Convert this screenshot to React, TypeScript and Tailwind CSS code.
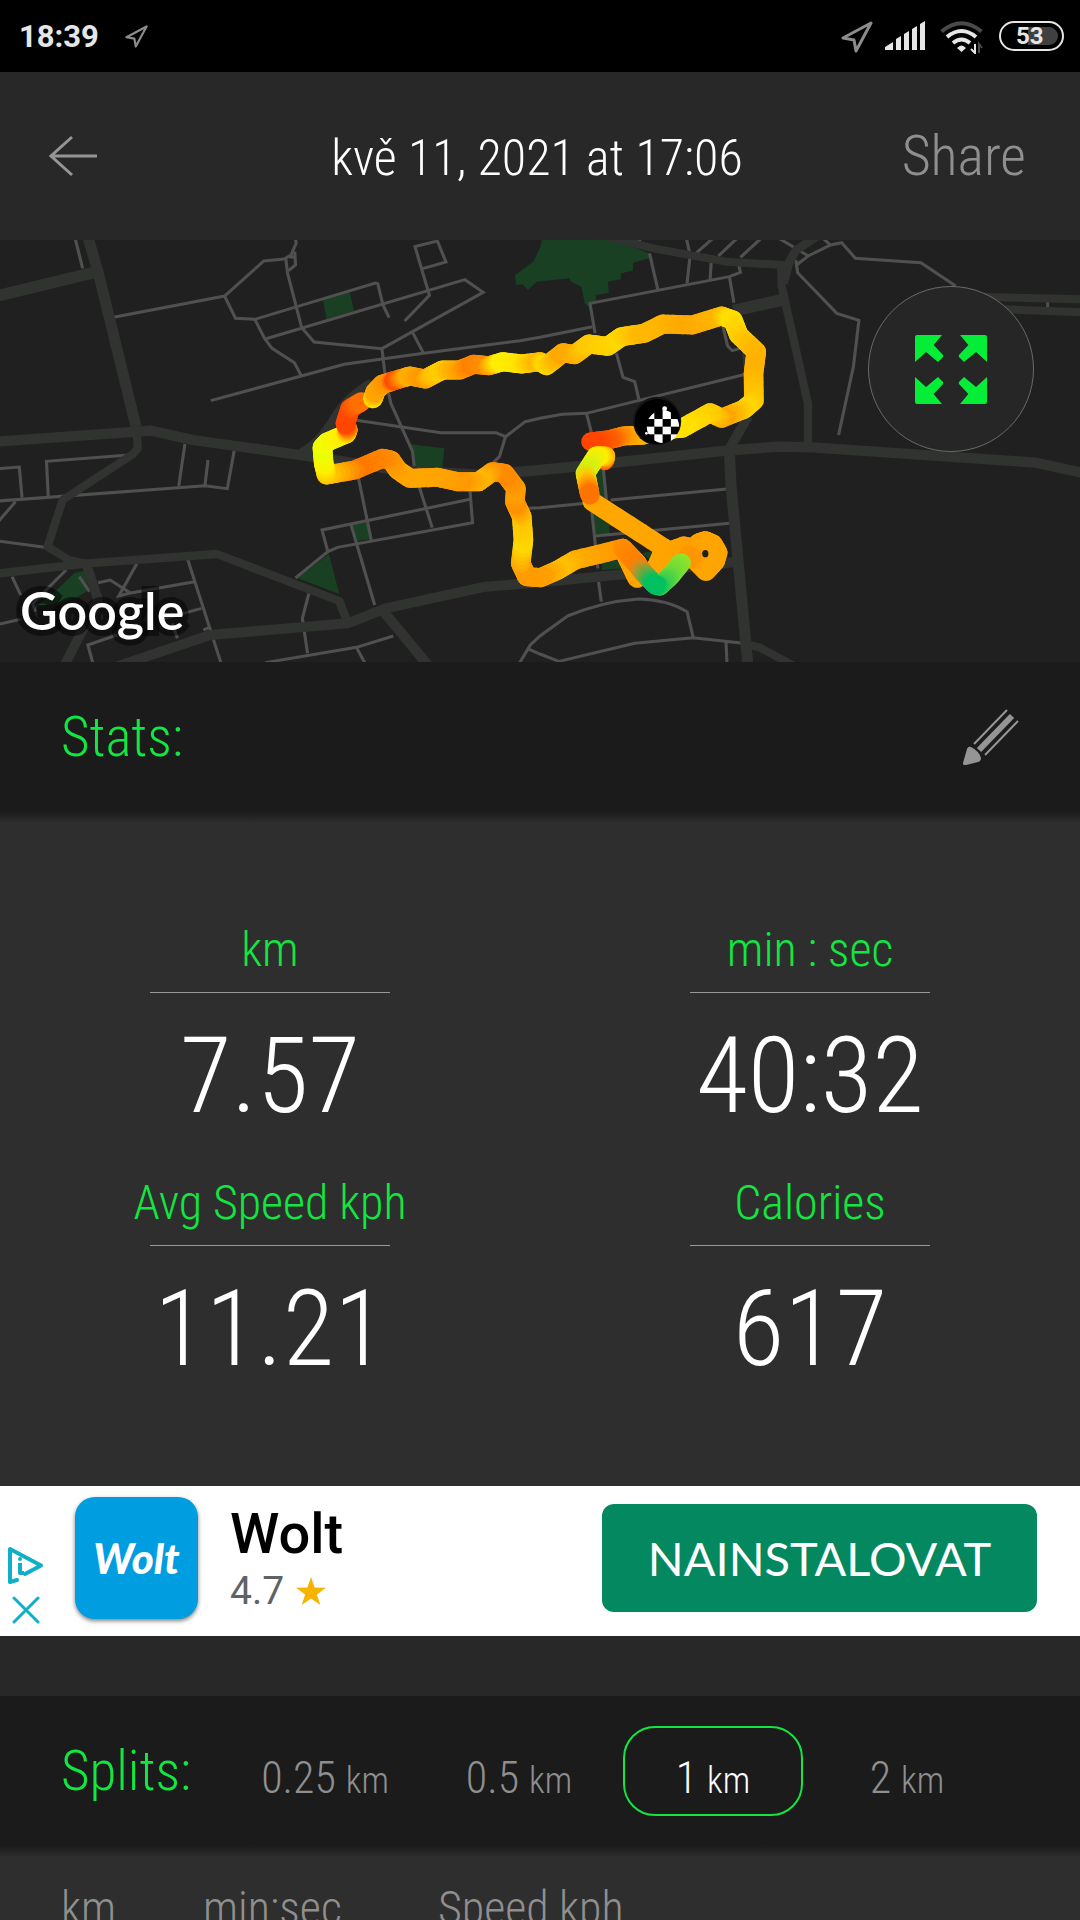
import React from "react";

const CONDENSED = "font-['Roboto_Condensed','Roboto','Liberation_Sans',sans-serif] font-light";

type RoutePoint = [number, number, string];

const MAJOR_ROADS: [string, number][] = [
  ["M-10 168 L275 97", 35],
  ["M255 -10 L285 97 L395 560", 32],
  ["M396 560 L400 625 L385 643 L182 780 L138 920 L200 960 L255 972", 24],
  ["M-10 605 L440 572 L560 600 L870 645 L1000 665 L1150 690 L1400 705 L1568 690 L1720 675 L2108 632 L2258 620 L2358 622 L3008 668 L3146 699", 31],
  ["M870 645 Q930 610 970 540 T1080 430", 30],
  ["M-10 1001 L255 970 L630 942 L985 1083 L1008 1145", 25],
  ["M250 970 L285 1080 L185 1280", 28],
  ["M330 1283 L610 1185 L1010 1150 L1120 1105 L1410 1040 L1568 1027 L1840 1000 L2140 965", 30],
  ["M1110 1110 L1250 1285", 30],
  ["M1760 -10 L1898 25 L2108 65 L2288 76", 24],
  ["M2370 -10 L2312 30 L2290 70 L2275 130", 26],
  ["M2268 80 L2270 140 L2346 490 L2346 620", 24],
  ["M2130 212 L2278 178", 36],
  ["M2840 170 L3146 178", 24],
  ["M2870 206 L3146 217", 24],
  ["M2118 640 L2123 740 L2172 1280", 32],
  ["M2172 530 L2120 622", 28],
  ["M2165 320 L2175 420", 24],
  ["M2175 1215 L2205 1222 L2310 1280", 24],
];

const MINOR_ROADS = [
  "M218 -5 L240 85",
  "M330 232 L652 168 L766 63 L825 57 L845 45 L860 10 L858 -5",
  "M652 168 L684 235 L740 238 L1090 129 L1097 131 L1112 195 L1130 233",
  "M830 57 L835 100 L876 263 L912 306 L1109 326 L1403 157 L1350 119 L770 297",
  "M740 238 L768 295 L790 325 L855 368 L875 408",
  "M856 35 L858 75 L838 92 M840 52 L852 50",
  "M1227 86 L1295 66 L1270 3 L1205 20 L1247 166 L1175 243",
  "M612 482 L1000 373 L1230 340 L1510 302 L1568 292 L1720 260",
  "M1198 277 L1230 340",
  "M1109 326 L1120 420 L1135 490 L1198 635 L1205 700 L1255 863",
  "M1030 540 L1280 578 L1440 578 L1468 590 L1525 545 L1568 535 L1633 523 L1703 520 L2168 402",
  "M1468 590 L1450 650 L1425 675",
  "M1040 710 L1078 900",
  "M1365 778 L935 870 L952 935 L980 922 L1372 848 L1365 755",
  "M1018 850 L1088 1095",
  "M952 935 L858 1014",
  "M-5 686 L56 681 L64 773",
  "M140 768 L135 664 L365 646",
  "M-5 783 L595 737 L660 746 L680 632",
  "M537 612 L519 738 M604 660 L595 737",
  "M45 785 L-5 845",
  "M-5 903 L130 922",
  "M545 958 L642 1270 M35 1010 L60 1065 M192 990 L95 1090 L102 1115",
  "M398 970 L345 1068 L375 1060 L565 1025 M285 1028 L320 1020 L380 1060",
  "M-5 1153 L60 1138 M470 1138 L585 1105 M500 1150 L515 1195 M230 1010 L260 1055",
  "M270 1270 L255 1215 L340 1185 M590 1170 L606 1163",
  "M897 1060 L878 1135 L893 1240 M770 1268 L1035 1222 L1142 1188 M1035 1222 L1060 1270",
  "M1508 1270 L1540 1215 L1568 1188 L1648 1128 Q1748 1085 1853 1077 Q1935 1078 1995 1115 L2013 1193",
  "M1530 1225 L1568 1242 L1623 1264 L1843 1210 L2013 1193 L2158 1210 M2108 1205 L2111 1270",
  "M1500 806 L1568 803 L1700 790 M1773 780 L2111 747",
  "M1858 -5 L1856 8 M1886 40 L1910 148 M1993 -5 L2004 45 L1995 130 M2065 68 L2062 118",
  "M2070 -5 L2023 38 M2140 -5 L2086 48 M2210 -5 L2150 52",
  "M2145 75 L2150 97 L2118 110 L1713 190 L1728 280 M2118 110 L2131 188",
  "M2262 -5 L2346 47 M2313 75 L2348 47 L2411 15 L2390 -5 M2411 15 L2444 8 L2484 55 L2674 68 L2775 138",
  "M2311 60 L2316 98 L2430 220 L2494 241 L2478 380 L2435 585",
  "M2098 255 L2113 318 L2126 332 L2150 325",
  "M1790 340 L1809 412 L1843 425 L1855 478 M1703 520 L1718 580",
  "M1752 690 L1761 780 M1718 810 L1736 985 M1728 888 L2118 850 M1738 1025 L1746 1085",
  "M3042 185 L3042 205",
];

const PARKS = [
  "938,180 1015,155 1028,212 948,237",
  "1192,613 1290,625 1284,685 1205,685",
  "1022,852 1065,848 1075,898 1037,903",
  "955,942 985,1062 865,1015",
  "175,1040 215,1000 245,993 258,1050 220,1075 150,1092 105,1100",
  "1496,105 1548,65 1568,25 1575,-5 1768,-5 1886,40 1886,55 1838,68 1838,92 1803,100 1803,118 1765,125 1768,158 1731,165 1731,185 1708,200 1698,190 1688,140 1658,125 1653,115 1558,125 1533,150 1518,133 1498,135",
  "1728,690 1753,690 1760,770 1728,790",
  "1723,815 1768,835 1770,882 1726,885",
  "1748,965 1803,960 1818,985 1748,990",
  "1865,940 1893,933 1893,965",
];

const SOUTH_LOOP: RoutePoint[] = [
  [1720, 785, "#ffa800"], [1930, 925, "#ffa500"], [1905, 985, "#ffa500"], [1930, 940, "#ffa500"],
  [1985, 918, "#ffa200"], [2012, 925, "#ffa000"], [2030, 908, "#ffa000"], [2048, 902, "#ffa200"],
  [2070, 912, "#ffa500"], [2084, 938, "#ffa500"], [2076, 965, "#ffa500"], [2050, 994, "#ffa500"],
  [2018, 960, "#ffa500"], [2000, 945, "#ff9500"],
];

const MAIN_LOOP: RoutePoint[] = [
  [1850, 1015, "#ffa500"], [1820, 950, "#ffa500"], [1850, 970, "#ff9a00"], [1808, 925, "#ff9000"],
  [1670, 960, "#ffa800"], [1620, 990, "#ffc000"], [1570, 1013, "#ffa000"], [1530, 1010, "#ff9c00"],
  [1512, 970, "#ff9c00"], [1520, 900, "#ffd800"], [1515, 830, "#ffc800"], [1495, 785, "#ff9000"],
  [1498, 745, "#ffa000"], [1465, 700, "#ff8c00"], [1430, 695, "#ff8c00"], [1390, 725, "#ffb800"],
  [1330, 725, "#ff9800"], [1270, 712, "#ffa200"], [1190, 715, "#ffa500"], [1155, 690, "#ffa500"],
  [1135, 660, "#ff9800"], [1110, 655, "#ff8c00"], [1030, 690, "#ff7800"], [948, 705, "#ffc000"],
  [940, 670, "#ffee00"], [936, 622, "#eaff00"], [950, 606, "#f0ff00"], [1005, 582, "#ffee00"],
  [1010, 570, "#ffb000"], [1003, 550, "#ff4500"], [1017, 505, "#ff4800"], [1050, 485, "#ff7000"],
];

const NORTH_LOOP: RoutePoint[] = [
  [1083, 476, "#fff000"], [1090, 455, "#ffa800"], [1110, 433, "#ffa000"], [1135, 425, "#ff9000"],
  [1150, 420, "#ff4500"], [1190, 408, "#ffb000"], [1235, 417, "#ff9800"], [1262, 402, "#ffc000"],
  [1285, 390, "#ffd000"], [1335, 390, "#ffa800"], [1375, 373, "#ff8000"], [1420, 377, "#ff9000"],
  [1460, 365, "#fff000"], [1515, 372, "#ffe600"], [1568, 365, "#ffb800"], [1587, 377, "#ffdc00"],
  [1635, 338, "#ffa800"], [1668, 344, "#ffaa00"], [1710, 312, "#ffc800"], [1765, 319, "#ffd000"],
  [1805, 290, "#ffd800"], [1870, 280, "#ffb800"], [1925, 252, "#ffb600"], [2010, 255, "#ffa800"],
  [2095, 228, "#ffb400"], [2128, 240, "#ffe000"], [2145, 285, "#ffd400"], [2196, 335, "#ffb800"],
  [2188, 400, "#ffb000"], [2189, 482, "#ffc400"], [2160, 508, "#ffd800"], [2095, 535, "#ffa500"],
  [2062, 518, "#ffc800"], [1980, 565, "#ffe000"], [1920, 570, "#ffe000"], [1870, 585, "#ffc400"],
  [1810, 588, "#ffa000"], [1765, 600, "#ff6000"], [1716, 605, "#ff4500"],
];

const WEST_SPUR: RoutePoint[] = [
  [1755, 662, "#ff4500"], [1758, 648, "#ffa500"], [1732, 648, "#fff000"],
  [1700, 700, "#d4f012"], [1706, 730, "#ffc400"], [1713, 765, "#ff7400"],
];

const START_LEG: RoutePoint[] = [
  [1808, 925, "#ff9000"], [1855, 980, "#ff8000"], [1868, 998, "#d09020"], [1905, 1037, "#00c060"],
];

const START_TAIL: RoutePoint[] = [
  [1978, 968, "#98e428"], [1945, 1010, "#70dc38"], [1915, 1038, "#38cc50"], [1902, 1033, "#00c060"],
];

const mix = (a: string, b: string, t: number) => {
  const channel = (hex: string, i: number) => parseInt(hex.slice(1 + i * 2, 3 + i * 2), 16);
  const parts = [0, 1, 2].map((i) => Math.round(channel(a, i) * (1 - t) + channel(b, i) * t));
  return `rgb(${parts.join(",")})`;
};

function Route({ points }: { points: RoutePoint[] }) {
  const steps = 6;
  return (
    <g strokeWidth="57" strokeLinecap="round">
      {points.slice(1).flatMap(([x2, y2, c2], i) => {
        const [x1, y1, c1] = points[i];
        return Array.from({ length: steps }, (_, s) => {
          const a = s / steps;
          const b = (s + 1) / steps;
          return (
            <line
              key={`${i}-${s}`}
              x1={x1 + (x2 - x1) * a}
              y1={y1 + (y2 - y1) * a}
              x2={x1 + (x2 - x1) * b}
              y2={y1 + (y2 - y1) * b}
              stroke={mix(c1, c2, b)}
            />
          );
        });
      })}
    </g>
  );
}

function RouteMap() {
  return (
    <svg viewBox="0 0 3136 1266" preserveAspectRatio="none" className="block aspect-[1080/422] w-full" role="img" aria-label="Run route map">
      <rect width="3136" height="1266" fill="#202020" />
      <g fill="#194022">
        {PARKS.map((p) => <polygon key={p} points={p} />)}
      </g>
      <g fill="none" stroke="#505050" strokeWidth="9">
        {MINOR_ROADS.map((d) => <path key={d} d={d} />)}
      </g>
      <g fill="none" stroke="#313330" strokeLinejoin="round">
        {MAJOR_ROADS.map(([d, w]) => <path key={d} d={d} strokeWidth={w} />)}
      </g>
      <Route points={SOUTH_LOOP} />
      <ellipse cx="2048" cy="941" rx="9" ry="11" fill="#202020" />
      <Route points={MAIN_LOOP} />
      <Route points={NORTH_LOOP} />
      <Route points={WEST_SPUR} />
      <Route points={START_LEG} />
      <Route points={START_TAIL} />
      <ellipse cx="1908" cy="543" rx="70" ry="73" fill="#151515" />
      <ellipse cx="1909" cy="545" rx="66" ry="68" fill="#000" />
      <clipPath id="flag"><ellipse cx="1925" cy="560" rx="47" ry="49" /></clipPath>
      <g clipPath="url(#flag)" fill="#fff">
        <rect x="1876" y="514" width="24" height="23" />
        <rect x="1924" y="508" width="24" height="29" />
        <rect x="1900" y="537" width="24" height="23" />
        <rect x="1948" y="537" width="24" height="23" />
        <rect x="1876" y="560" width="24" height="23" />
        <rect x="1924" y="560" width="24" height="23" />
        <rect x="1900" y="583" width="24" height="26" />
        <rect x="1948" y="583" width="24" height="26" />
      </g>
      <circle cx="1930" cy="506" r="7" fill="#fff" />
      <circle cx="1877" cy="580" r="4" fill="#fff" />
    </svg>
  );
}

function LocationIcon({ className }: { className: string }) {
  return (
    <svg viewBox="0 0 32 32" className={className} fill="none" stroke="#8c8c8c" strokeWidth="3" strokeLinejoin="round" aria-hidden="true">
      <path d="M30 2 L2 17 L13 19 L15 30 Z" />
    </svg>
  );
}

function StatusBar() {
  return (
    <div className="flex h-[72px] items-start bg-black pr-4 pl-[19px] text-[#e6e6e6]">
      <span className="pt-[17px] font-['Roboto',sans-serif] text-[31px] leading-10 font-bold">18:39</span>
      <LocationIcon className="mt-[25px] ml-[26px] size-[23px]" />
      <div className="mt-[21px] ml-auto flex items-start">
        <LocationIcon className="size-8" />
        <svg viewBox="0 0 40 30" className="ml-3 h-[30px] w-10" fill="#e6e6e6" aria-hidden="true">
          <path d="M0 29 V26 L8 21 V29 Z M11 18 L16 15 V29 H11 Z M19 13 L24 10 V29 H19 Z M27 8 L32 5 V29 H27 Z M35 3 L40 0 V29 H35 Z" />
        </svg>
        <svg viewBox="0 0 43 33" className="ml-[15px] h-[33px] w-[43px]" fill="none" strokeWidth="4" aria-hidden="true">
          <path d="M1.500 10.500 Q21.500 -6 41.500 10.500" stroke="#4a4a4a" />
          <path d="M7 16 Q21.500 4 36 16 M13 22 Q21.500 15 30 22" stroke="#e6e6e6" />
          <path d="M17 27 Q21.500 22 26 27 L21.500 31 Z" fill="#e6e6e6" />
          <path d="M35 23 V32 L31 28" stroke="#e6e6e6" strokeWidth="2" />
          <path d="M39 32 V23 L42 27" stroke="#4a4a4a" strokeWidth="2" />
        </svg>
        <div className="ml-4 flex h-[30px] w-[65px] rounded-full border-2 border-[#e6e6e6] p-1 pl-[27px]">
          <div className="flex flex-1 items-center rounded-r-full bg-[#404040]">
            <span className="-ml-3 font-['Roboto',sans-serif] text-2xl leading-5 font-bold">53</span>
          </div>
        </div>
      </div>
    </div>
  );
}

function Header() {
  return (
    <header className={`${CONDENSED} grid h-[168px] grid-cols-[1fr_auto_1fr] items-center bg-[#282828] pr-[54px] pl-12 text-white`}>
      <button type="button" aria-label="Back" className="justify-self-start">
        <svg viewBox="0 0 50 42" className="h-[42px] w-[50px]" fill="none" stroke="#959595" strokeWidth="3" aria-hidden="true">
          <path d="M49 21 H2 M24 2 L3 21 L24 40" />
        </svg>
      </button>
      <h1 className="pt-1 text-[50px] leading-[60px]">kvě 11, 2021 at 17:06</h1>
      <button type="button" className="justify-self-end text-[56px] leading-[60px] text-[#8f8f8f]">Share</button>
    </header>
  );
}

const STATS = [
  { label: "km", value: "7.57" },
  { label: "min : sec", value: "40:32" },
  { label: "Avg Speed kph", value: "11.21" },
  { label: "Calories", value: "617" },
];

const SPLITS = [["0.25", "km"], ["0.5", "km"], ["1", "km"], ["2", "km"]];

function Ad() {
  return (
    <aside className="flex h-[150px] items-center bg-white pr-[43px] pl-2 font-['Roboto',sans-serif]">
      <div className="flex w-9 flex-col items-start gap-3 pt-12">
        <button type="button" aria-label="About this ad">
          <svg viewBox="0 0 36 37" className="h-[37px] w-9" fill="none" stroke="#10afc9" strokeWidth="4" strokeLinejoin="round" strokeLinecap="round" aria-hidden="true">
            <path d="M9 33 L2 35 V2 L33 18.500 L17 27" />
            <path d="M12 16 V26 H16" strokeLinecap="butt" />
            <path d="M12 12 V12.100" />
          </svg>
        </button>
        <button type="button" aria-label="Close ad" className="ml-1">
          <svg viewBox="0 0 28 28" className="size-7" stroke="#10afc9" strokeWidth="3" strokeLinecap="round" aria-hidden="true">
            <path d="M2 2 L26 26 M26 2 L2 26" />
          </svg>
        </button>
      </div>
      <div className="mb-1.5 ml-[31px] flex h-[122px] w-[123px] items-center justify-center rounded-[20px] bg-[#009de0] shadow-[0_2px_4px_rgba(0,0,0,0.5)]">
        <span className="font-['Lato',sans-serif] text-[42px] leading-none font-black text-white italic">Wolt</span>
      </div>
      <div className="ml-8">
        <p className="text-[56px] leading-[60px] font-medium text-black">Wolt</p>
        <p className="flex items-center gap-3 text-[39px] leading-[54px] text-[#5f6368]">
          4.7
          <svg viewBox="0 0 30 28" className="h-7 w-[30px]" fill="#f4b400" aria-label="stars">
            <path d="M15 0 L18.600 10.500 L30 10.700 L20.900 17.500 L24.300 28 L15 21.600 L5.700 28 L9.100 17.500 L0 10.700 L11.400 10.500 Z" />
          </svg>
        </p>
      </div>
      <button type="button" className="mb-1.5 ml-auto h-[108px] w-[435px] rounded-xl bg-[#048860] font-['Lato',sans-serif] text-[47px] text-white">
        NAINSTALOVAT
      </button>
    </aside>
  );
}

export default function App() {
  return (
    <div className="h-screen overflow-hidden bg-[#282828]">
      <StatusBar />
      <Header />

      <div className="relative">
        <RouteMap />
        <span className="absolute bottom-5 left-5 font-['Lato',sans-serif] text-[52px] leading-[64px] font-semibold text-white [-webkit-text-stroke:12px_rgba(0,0,0,0.5)] [paint-order:stroke_fill]">
          Google
        </span>
        <button type="button" aria-label="Expand map" className="absolute top-[46px] right-[46px] flex size-[166px] items-center justify-center rounded-full border border-[#6a6a6a] bg-[#262626]">
          <svg viewBox="0 0 72 69" className="h-[69px] w-[72px]" fill="#04ee38" aria-hidden="true">
            <path d="M0 2 Q0 0 2 0 H27 L18.600 10 L28 20 Q29 22 27 23 L23 27 L11 17 L0 27 Z" />
            <path d="M72 2 Q72 0 70 0 H45 L53.400 10 L44 20 Q43 22 45 23 L49 27 L61 17 L72 27 Z" />
            <path d="M0 67 Q0 69 2 69 H27 L18.600 59 L28 49 Q29 47 27 46 L23 42 L11 52 L0 42 Z" />
            <path d="M72 67 Q72 69 70 69 H45 L53.400 59 L44 49 Q43 47 45 46 L49 42 L61 52 L72 42 Z" />
          </svg>
        </button>
      </div>

      <div className={`${CONDENSED} flex h-[150px] items-center justify-between bg-[#1b1b1b] pr-[61px] pl-[61px]`}>
        <h2 className="text-[55px] leading-[60px] text-[#12e640]">Stats:</h2>
        <button type="button" aria-label="Edit stats">
          <svg viewBox="0 0 56 56" className="size-14" aria-hidden="true">
            <path d="M0 54 L4 40 Q5 37 8 38 Q16 42 18 49 Q18 52 15 53 L3 56 Q0 57 0 54 Z" fill="#959595" />
            <path d="M11 35 L44 1 M22 46 L55 12" stroke="#959595" strokeWidth="2" />
            <path d="M16 41 L49 7" stroke="#959595" strokeWidth="6" />
          </svg>
        </button>
      </div>

      <dl className={`${CONDENSED} grid grid-cols-2 gap-y-11 bg-[linear-gradient(to_bottom,#1b1b1b,#2e2e2e_11px)] pt-[108px] pb-[104px] text-center`}>
        {STATS.map(({ label, value }) => (
          <div key={label} className="flex flex-col items-center">
            <dt className="flex flex-col items-center text-5xl leading-[60px] text-[#12e640] after:mt-3 after:h-px after:w-60 after:bg-[#999999]">
              {label}
            </dt>
            <dd className="mt-[30px] text-[106px] leading-[106px] text-white">{value}</dd>
          </div>
        ))}
      </dl>

      <Ad />

      <div className={`${CONDENSED} mt-[60px] flex h-[150px] items-center bg-[#1b1b1b] pl-[61px]`}>
        <h2 className="w-[174px] text-[55px] leading-[60px] text-[#12e640]">Splits:</h2>
        <div className="flex gap-[14px]">
          {SPLITS.map(([amount, unit]) => {
            const selected = amount === "1";
            return (
              <button
                key={amount}
                type="button"
                aria-pressed={selected}
                className={`h-[90px] w-[180px] rounded-[32px] border-2 pt-4 text-[44px] leading-[60px] ${selected ? "border-[#12e640] text-white" : "border-transparent text-[#8f8f8f]"}`}
              >
                {amount} <span className="text-[36px]">{unit}</span>
              </button>
            );
          })}
        </div>
      </div>

      <section className="bg-[linear-gradient(to_bottom,#1b1b1b,#2e2e2e_11px)] pt-8">
        <table className={`${CONDENSED} ml-[61px] text-left text-[46px] leading-[60px] text-[#8f8f8f]`}>
          <thead>
            <tr>
              <th scope="col" className="w-[142px] font-light">km</th>
              <th scope="col" className="w-[235px] font-light">min:sec</th>
              <th scope="col" className="font-light">Speed kph</th>
            </tr>
          </thead>
        </table>
      </section>
    </div>
  );
}
